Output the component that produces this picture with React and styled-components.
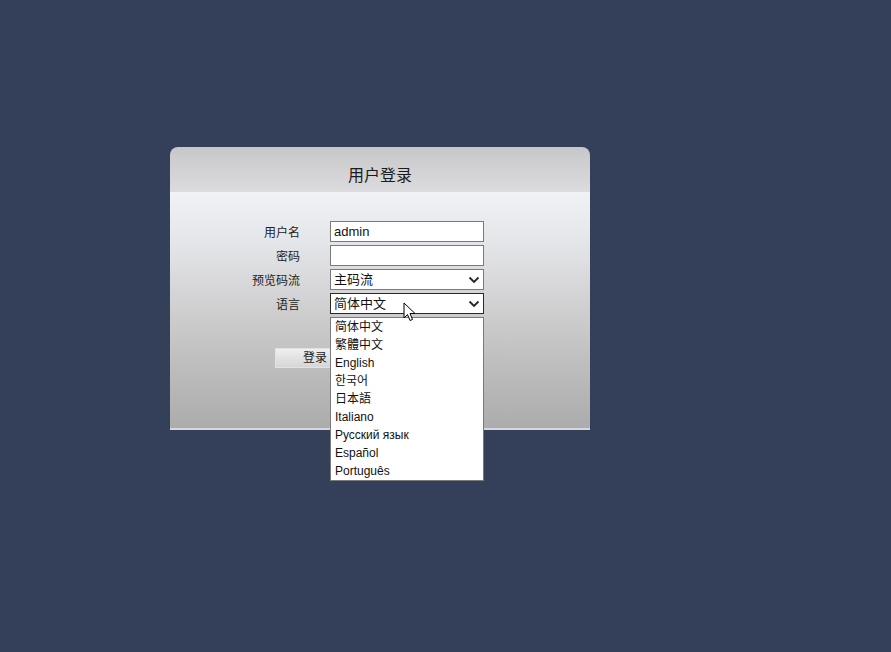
import React from 'react';
import styled, { createGlobalStyle } from 'styled-components';

const GlobalStyle = createGlobalStyle`
  html, body {
    margin: 0;
    padding: 0;
    background: #343f5a;
    font-family: "Liberation Sans", "Noto Sans CJK SC", sans-serif;
  }
`;

const Page = styled.div`
  width: 891px;
  height: 652px;
  background: #343f5a;
  padding: 147px 0 0 170px;
  box-sizing: border-box;
  position: relative;
  overflow: hidden;
`;

const Panel = styled.div`
  width: 420px;
  height: 283px;
  border-radius: 8px 8px 0 0;
  overflow: hidden;
  display: flex;
  flex-direction: column;
  border-bottom: 2px solid #d5d8dc;
  box-sizing: border-box;
`;

const Header = styled.div`
  height: 45px;
  flex: none;
  box-sizing: border-box;
  padding-top: 19px;
  text-align: center;
  font-size: 16px;
  line-height: 20px;
  color: #1c1c1c;
  background: linear-gradient(#c7c7c9, #dcdcde);
`;

const Body = styled.div`
  flex: 1;
  position: relative;
  padding-top: 29px;
  background: linear-gradient(#f1f2f6 0%, #e4e5e8 22%, #cbcbcc 55%, #b9b9b9 80%, #acacac 100%);
`;

const Form = styled.div`
  display: grid;
  grid-template-columns: 130px 154px;
  grid-auto-rows: 21px;
  column-gap: 30px;
  row-gap: 3px;
`;

const Label = styled.div`
  height: 21px;
  box-sizing: border-box;
  padding-top: 4px;
  text-align: right;
  font-size: 12px;
  line-height: 17px;
  color: #222;
`;

const Field = styled.div`
  height: 21px;
  box-sizing: border-box;
  border: 1px solid ${(p) => (p.focused ? '#2a2a2a' : '#7a7a7a')};
  background: #fff;
  font-size: 13px;
  line-height: 19px;
  padding: 0 3px;
  color: #111;
  display: flex;
  align-items: center;
  justify-content: space-between;
`;

const Chevron = () => (
  <svg width="12" height="8" viewBox="0 0 12 8">
    <path d="M1.5 1.5 L6 6 L10.5 1.5" fill="none" stroke="#222" strokeWidth="1.8" />
  </svg>
);

const LoginButton = styled.div`
  margin: 34px 0 0 105px;
  width: 80px;
  height: 20px;
  box-sizing: border-box;
  border: 1px solid #e2e2e2;
  background: linear-gradient(#efefef, #d6d6d6);
  font-size: 12px;
  line-height: 18px;
  text-align: center;
  color: #222;
`;

const DropList = styled.div`
  position: absolute;
  left: 330px;
  top: 317px;
  width: 154px;
  box-sizing: border-box;
  border: 1px solid #7a7a7a;
  background: #fff;
  z-index: 5;
`;

const Option = styled.div`
  height: 18px;
  line-height: 19px;
  font-size: 12px;
  padding-left: 4px;
  color: #111;
`;

const Cursor = styled.svg`
  position: absolute;
  left: 403px;
  top: 302px;
  z-index: 10;
`;

const languages = [
  '简体中文',
  '繁體中文',
  'English',
  '한국어',
  '日本語',
  'Italiano',
  'Русский язык',
  'Español',
  'Português',
];

export default function App() {
  return (
    <Page>
      <GlobalStyle />
      <Panel>
        <Header>用户登录</Header>
        <Body>
          <Form>
            <Label>用户名</Label>
            <Field>admin</Field>
            <Label>密码</Label>
            <Field />
            <Label>预览码流</Label>
            <Field>
              主码流
              <Chevron />
            </Field>
            <Label>语言</Label>
            <Field focused>
              简体中文
              <Chevron />
            </Field>
          </Form>
          <LoginButton>登录</LoginButton>
        </Body>
      </Panel>
      <DropList>
        {languages.map((l) => (
          <Option key={l}>{l}</Option>
        ))}
      </DropList>
      <Cursor width="14" height="22" viewBox="0 0 14 22">
        <path
          d="M1 1 L1 16 L4.5 12.5 L7 18.5 L9.5 17.5 L7 11.5 L12 11.5 Z"
          fill="#fff"
          stroke="#000"
          strokeWidth="1"
          strokeLinejoin="round"
        />
      </Cursor>
    </Page>
  );
}
